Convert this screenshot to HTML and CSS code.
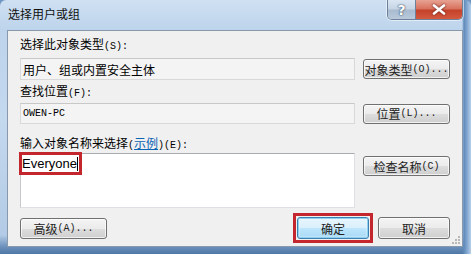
FILE: index.html
```html
<!DOCTYPE html>
<html>
<head>
<meta charset="utf-8">
<link rel="stylesheet" href="styles.css">
</head>
<body>
<div class="window">
  <div class="titlebar">
    <span class="title">选择用户或组</span>
    <div class="caption-btns">
      <span class="cb help">?</span>
      <span class="cb close"><svg width="14" height="11" viewBox="0 0 14 11"><path d="M2 1.5 L12 9.5 M12 1.5 L2 9.5" stroke="#fff" stroke-width="2.6" stroke-linecap="round"/></svg></span>
    </div>
  </div>
  <div class="content">
    <div class="label l1">选择此对象类型<span class="lat">(S):</span></div>
    <div class="row r1">
      <div class="field">用户、组或内置安全主体</div>
      <div class="btn side">对象类型<span class="lat">(O)...</span></div>
    </div>
    <div class="label l2">查找位置<span class="lat">(F):</span></div>
    <div class="row r2">
      <div class="field mono">OWEN-PC</div>
      <div class="btn side">位置<span class="lat">(L)...</span></div>
    </div>
    <div class="label l3">输入对象名称来选择<span class="lat">(</span><span class="link">示例</span><span class="lat">)(E):</span></div>
    <div class="row r3">
      <div class="textarea"><span class="mark">Everyone<span class="caret"></span></span></div>
      <div class="btn side top">检查名称<span class="lat">(C)</span></div>
    </div>
    <div class="bottom">
      <div class="btn adv">高级<span class="lat">(A)...</span></div>
      <div class="spacer"></div>
      <div class="okmark"><div class="btn ok">确定</div></div>
      <div class="btn cancel">取消</div>
    </div>
    <svg class="grip" width="10" height="10" viewBox="0 0 10 10">
      <rect x="7" y="1" width="2" height="2" fill="#b8b8b8"/>
      <rect x="4" y="4" width="2" height="2" fill="#b8b8b8"/>
      <rect x="7" y="4" width="2" height="2" fill="#b8b8b8"/>
      <rect x="1" y="7" width="2" height="2" fill="#b8b8b8"/>
      <rect x="4" y="7" width="2" height="2" fill="#b8b8b8"/>
      <rect x="7" y="7" width="2" height="2" fill="#b8b8b8"/>
    </svg>
  </div>
</div>
</body>
</html>
```
FILE: styles.css
```css
html, body {
  margin: 0;
  padding: 0;
  background: #6f96c2;
}
body {
  font-family: "Noto Sans CJK SC", "Liberation Sans", sans-serif;
  font-size: 12px;
  color: #000;
}
.window {
  width: 471px;
  height: 254px;
  box-sizing: border-box;
  display: flex;
  flex-direction: column;
  background:
    linear-gradient(to right, rgba(255,255,255,0) 0, rgba(255,255,255,0) 462px, #5f8ab9 464px, #8db0d6 468px, #b9d0ea 471px),
    linear-gradient(to bottom, #cfe0f2 0, #bdd4ec 30px, #c4d8ee 120px, #b3cbe6 235px, #6a8fba 247px, #4f77a6 254px);
  border-radius: 6px 6px 0 0;
  overflow: hidden;
}
.titlebar {
  height: 30px;
  display: flex;
  align-items: flex-start;
  padding: 0 8px 0 8px;
  box-sizing: border-box;
}
.title {
  line-height: 14px;
  margin-top: 7px;
  flex: 1;
  color: #111;
}
.caption-btns {
  display: flex;
  height: 19px;
  border: 1px solid #6d819a;
  border-top: none;
  border-radius: 0 0 5px 5px;
  overflow: hidden;
  box-shadow: 0 0 0 1px rgba(255,255,255,0.5);
}
.cb {
  display: flex;
  align-items: center;
  justify-content: center;
  height: 19px;
}
.help {
  width: 27px;
  background: linear-gradient(to bottom, #dbe6f2 0, #c7d5e4 45%, #a9bbcf 55%, #b9cadc 100%);
  border-right: 1px solid #6d819a;
  color: #fff;
  font-family: "DejaVu Sans", sans-serif;
  font-weight: bold;
  font-size: 14px;
  text-shadow: 0 0 2px #33475e, 0 0 1px #33475e;
}
.close {
  width: 46px;
  background: linear-gradient(to bottom, #e8a393 0, #d8735f 45%, #c4422a 55%, #d35a3f 100%);
}
.close svg {
  filter: drop-shadow(0 0 1px #5a1a10);
}
.content {
  flex: 1;
  margin: 0 8px 7px 7px;
  background: #f0f0f0;
  border: 1px solid #8899ad;
  padding: 6px 12px 0 12px;
  display: flex;
  flex-direction: column;
  position: relative;
}
.label {
  line-height: 14px;
  height: 14px;
  white-space: nowrap;
}
.lat {
  font-family: "Liberation Mono", monospace;
  font-size: 10px;
}
.link {
  color: #0a64b4;
  text-decoration: underline;
}
.l2 { margin-top: 4px; }
.l3 { margin-top: 12px; }
.row {
  display: flex;
  align-items: center;
  gap: 8px;
}
.r1 { margin-top: 7px; height: 22px; }
.r2 { margin-top: 5px; height: 21px; }
.r3 { margin-top: 3px; height: 55px; align-items: flex-start; }
.field {
  flex: 1;
  height: 100%;
  box-sizing: border-box;
  border: 1px solid #d9d9d9;
  border-top-color: #c8c8c8;
  background: #f4f4f4;
  padding-left: 2px;
  display: flex;
  align-items: center;
  white-space: nowrap;
}
.mono {
  font-family: "Liberation Mono", monospace;
  font-size: 10px;
  letter-spacing: 0;
}
.textarea {
  flex: 1;
  height: 100%;
  box-sizing: border-box;
  background: #fff;
  border: 1px solid #dfe0e6;
  border-top-color: #a8abb2;
  border-left-color: #c7c8ce;
}
.mark {
  display: inline-flex;
  align-items: center;
  margin: -2px 0 0 -2px;
  height: 23px;
  box-sizing: border-box;
  border: 3px solid #c4262e;
  padding: 0 1px 0 0;
  font-family: "Liberation Sans", sans-serif;
  font-size: 13px;
  line-height: 15px;
  color: #000;
}
.caret {
  display: inline-block;
  width: 1px;
  height: 14px;
  background: #000;
  margin-left: 0;
}
.btn {
  box-sizing: border-box;
  height: 20px;
  border: 1px solid #707070;
  border-radius: 3px;
  background: linear-gradient(to bottom, #f4f4f4 0, #ebebeb 50%, #dddddd 51%, #cfcfcf 100%);
  box-shadow: inset 0 0 0 1px rgba(255,255,255,0.7);
  display: flex;
  align-items: center;
  justify-content: center;
  white-space: nowrap;
  color: #222;
}
.side { width: 87px; flex: none; }
.top { margin-top: 3px; }
.bottom {
  margin-top: 5px;
  height: 30px;
  display: flex;
  align-items: center;
}
.adv { width: 87px; height: 21px; }
.spacer { flex: 1; }
.okmark {
  width: 80px;
  height: 30px;
  box-sizing: border-box;
  border: 3px solid #c4262e;
  padding: 1px;
}
.ok {
  height: 22px;
  border-color: #3c7fb1;
  background: linear-gradient(to bottom, #e8f5fc 0, #d9f0fc 50%, #bee6fd 51%, #a7d9f5 100%);
  box-shadow: inset 0 0 0 1px #8fd0f0, inset 0 0 2px 1px rgba(255,255,255,0.8);
}
.cancel {
  width: 72px;
  height: 22px;
  margin-left: 5px;
}
.grip {
  position: absolute;
  right: 1px;
  bottom: 1px;
}
```
